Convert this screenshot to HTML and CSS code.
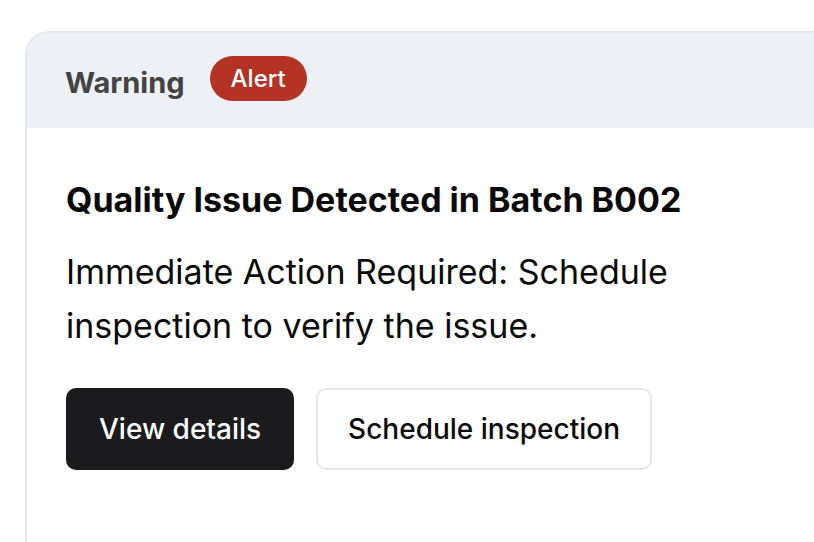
FILE: index.html
```html
<!DOCTYPE html>
<html>
<head>
<meta charset="utf-8">
<link rel="stylesheet" href="styles.css">
</head>
<body>
<div class="page">
  <div class="card">
    <div class="card-header">
      <span class="label">Warning</span>
      <span class="badge">Alert</span>
    </div>
    <div class="card-body">
      <h2 class="title">Quality Issue Detected in Batch B002</h2>
      <p class="text">Immediate Action Required: Schedule inspection to verify the issue.</p>
      <div class="actions">
        <button class="btn btn-primary">View details</button>
        <button class="btn btn-outline">Schedule inspection</button>
      </div>
    </div>
  </div>
</div>
</body>
</html>
```

FILE: styles.css
```css
html, body {
  margin: 0;
  padding: 0;
  background: #ffffff;
  overflow: hidden;
  width: 814px;
  height: 542px;
}
body {
  font-family: Inter, "Liberation Sans", sans-serif;
  color: #0a0a0a;
}
.page {
  padding: 31px 0 0 25px;
}
.card {
  width: 787px;
  height: 509px;
  border: 2px solid #e3e6ef;
  border-right: none;
  border-bottom: none;
  border-radius: 24px 0 0 0;
  background: #ffffff;
  overflow: hidden;
}
.card-header {
  height: 95px;
  background: #edf0f4;
  display: flex;
  align-items: center;
  gap: 25px;
  padding: 0 38px;
}
.label {
  font-size: 29px;
  font-weight: 700;
  color: #434343;
  padding-top: 4px;
}
.badge {
  background: #b53325;
  color: #ffffff;
  font-size: 24px;
  font-weight: 500;
  height: 45px;
  line-height: 45px;
  padding: 0 21px;
  border-radius: 23px;
  margin-top: -4px;
}
.card-body {
  padding: 52px 39px 0;
}
.title {
  margin: 0;
  font-size: 34px;
  line-height: 40px;
  font-weight: 700;
}
.text {
  margin: 25px 0 0;
  font-size: 34px;
  line-height: 54px;
  font-weight: 400;
  max-width: 640px;
}
.actions {
  display: flex;
  gap: 22px;
  margin-top: 35px;
}
.btn {
  font-family: Inter, "Liberation Sans", sans-serif;
  font-size: 28px;
  font-weight: 500;
  height: 82px;
  border-radius: 10px;
  cursor: pointer;
}
.btn-primary {
  background: #1b1b1d;
  color: #ffffff;
  border: none;
  padding: 0 33px;
}
.btn-outline {
  background: #ffffff;
  color: #0a0a0a;
  border: 2px solid #e3e6ef;
  padding: 0 30px;
}
```
